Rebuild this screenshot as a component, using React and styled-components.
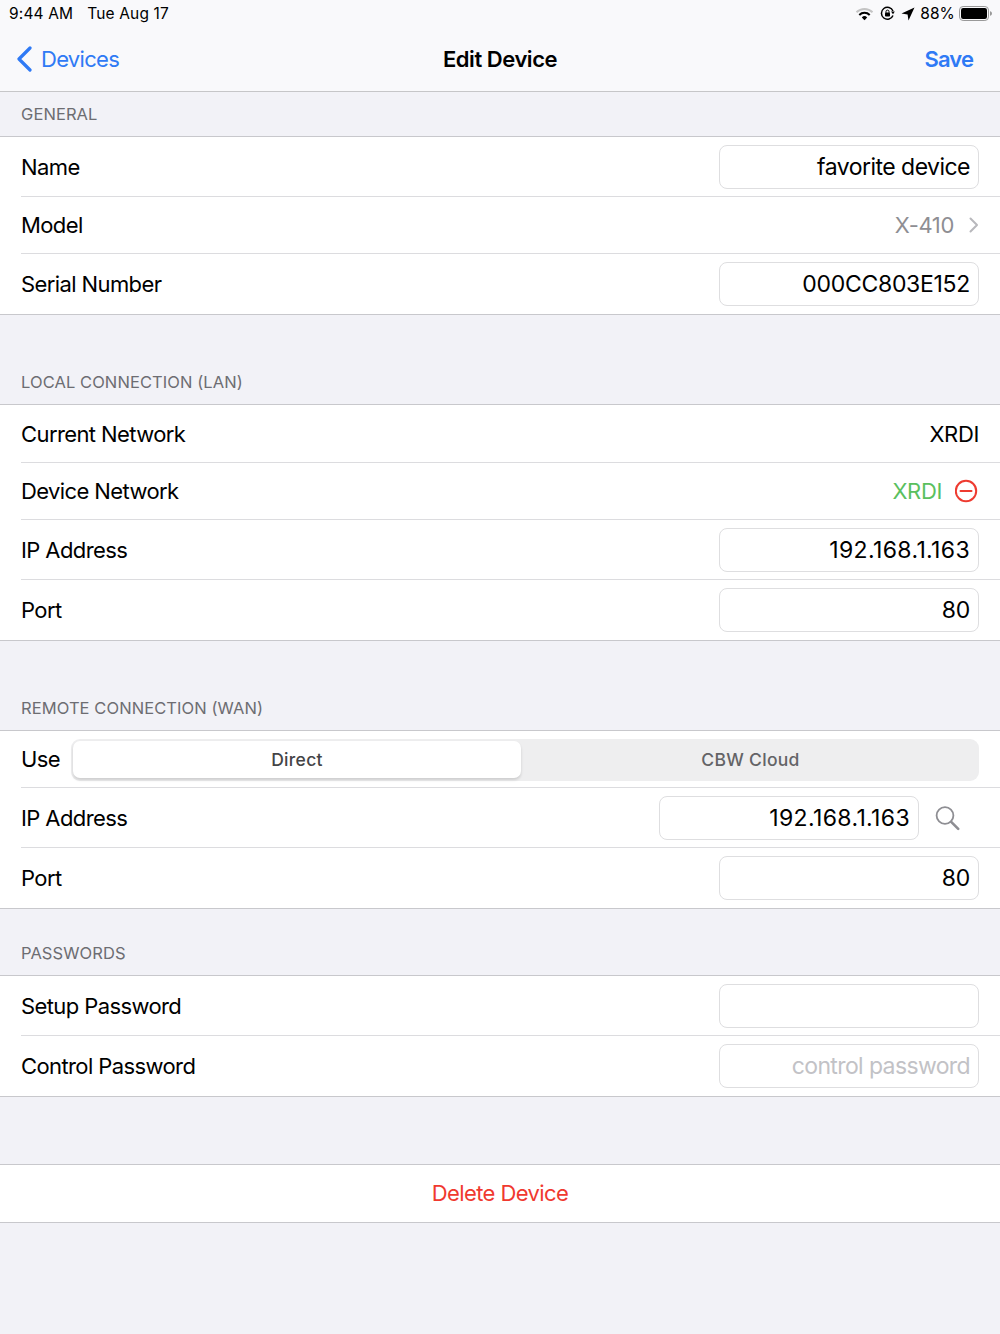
import React from "react";
import styled, { createGlobalStyle } from "styled-components";

const GlobalStyle = createGlobalStyle`
    html, body {
        margin: 0;
        padding: 0;
        background: #f2f2f7;
        font-family: Inter, "Liberation Sans", sans-serif;
    }
    * {
        box-sizing: border-box;
    }
`;

const Page = styled.div`
    width: 1000px;
    height: 1334px;
    overflow: hidden;
    background: #f2f2f7;
`;

const Header = styled.header`
    height: 92px;
    background: #f9f9fb;
    border-bottom: 1px solid #c6c6c8;
`;

const StatusBar = styled.div`
    height: 27px;
    padding: 0 7px 0 9px;
    display: flex;
    align-items: center;
    justify-content: space-between;
    font-size: 15.5px;
    letter-spacing: 0.15px;
    color: #000;
`;

const StatusGroup = styled.div`
    display: flex;
    align-items: center;
    gap: ${(props) => props.$gap || 14}px;
`;

const BatteryLevel = styled.span`
    margin: 0 -2px 0 -1px;
`;

const NavBar = styled.div`
    height: 64px;
    padding: 0 27px;
    display: grid;
    grid-template-columns: 1fr auto 1fr;
    align-items: center;
`;

const BackLink = styled.div`
    margin-left: -11px;
    display: flex;
    align-items: center;
    gap: 8px;
    font-size: 22px;
    letter-spacing: -0.7px;
    color: #2f7af5;
`;

const NavTitle = styled.div`
    font-size: 22px;
    font-weight: 600;
    letter-spacing: -0.45px;
    color: #000;
`;

const SaveLink = styled.div`
    justify-self: end;
    font-size: 22px;
    font-weight: 600;
    letter-spacing: -0.9px;
    color: #2f7af5;
`;

const SectionLabel = styled.div`
    height: ${(props) => props.$height}px;
    padding: 0 21px 12px;
    display: flex;
    align-items: flex-end;
    font-size: 16.5px;
    letter-spacing: 0.08px;
    color: #6d6d72;
`;

const Group = styled.section`
    background: #fff;
    border-top: 1px solid #c8c8cc;
    border-bottom: 1px solid #c8c8cc;
`;

const Row = styled.div`
    height: ${(props) => props.$height || 59}px;
    margin-left: 21px;
    padding-right: 21px;
    display: flex;
    align-items: center;
    justify-content: space-between;
    border-bottom: ${(props) => (props.$last ? "none" : "1px solid #dcdcdf")};
`;

const RowLabel = styled.div`
    font-size: 22px;
    letter-spacing: -0.6px;
    color: #000;
`;

const RowValue = styled.div`
    display: flex;
    align-items: center;
    gap: ${(props) => props.$gap || 13}px;
    font-size: 22px;
    letter-spacing: -0.35px;
    color: ${(props) => props.$color || "#000"};
`;

const Field = styled.div`
    width: 260px;
    height: 44px;
    padding: 0 8px;
    display: flex;
    align-items: center;
    justify-content: flex-end;
    border: 1px solid #dedee0;
    border-radius: 8px;
    background: #fff;
    font-size: 23px;
    letter-spacing: ${(props) => props.$tracking ?? -0.3}px;
    color: ${(props) => (props.$placeholder ? "#c2c2c6" : "#000")};
`;

const SearchField = styled.div`
    display: flex;
    align-items: center;
    gap: 16px;
    padding-right: 19px;
`;

const Segmented = styled.div`
    width: 908px;
    height: 42px;
    margin-top: 1px;
    padding: 2px;
    display: grid;
    grid-template-columns: 448px 1fr;
    align-items: center;
    background: #eeeeef;
    border-radius: 9px;
`;

const Segment = styled.div`
    height: ${(props) => (props.$active ? 37 : 38)}px;
    padding-left: ${(props) => (props.$active ? 0 : 3)}px;
    display: flex;
    align-items: center;
    justify-content: center;
    font-size: 17.5px;
    font-weight: 500;
    letter-spacing: 0.3px;
    color: ${(props) => (props.$active ? "#444446" : "#636366")};
    background: ${(props) => (props.$active ? "#fff" : "transparent")};
    border-radius: 7px;
    box-shadow: ${(props) =>
        props.$active ? "0 2px 3px rgba(0, 0, 0, 0.14)" : "none"};
`;

const DeleteButton = styled.div`
    height: 59px;
    margin-top: 67px;
    padding-bottom: 2px;
    display: flex;
    align-items: center;
    justify-content: center;
    background: #fff;
    border-top: 1px solid #c8c8cc;
    border-bottom: 1px solid #c8c8cc;
    font-size: 22px;
    letter-spacing: -0.6px;
    color: #f0392f;
`;

const WifiIcon = () => (
    <svg width="19" height="14" viewBox="0 0 19 14">
        <path d="M1.5 5.2a11.4 11.4 0 0 1 16 0" fill="none" stroke="#c4c4c4" strokeWidth="2" />
        <path d="M4.3 8a7.4 7.4 0 0 1 10.4 0" fill="none" stroke="#000" strokeWidth="2" />
        <path d="M9.5 13.2 6.8 10.4a3.9 3.9 0 0 1 5.4 0z" fill="#000" />
    </svg>
);

const RotationIcon = () => (
    <svg width="15" height="15" viewBox="0 0 15 15">
        <path d="M13 9.5A6 6 0 1 1 13 5" fill="none" stroke="#000" strokeWidth="1.5" />
        <path d="M11 5.5h3.8L13 8.2z" fill="#000" />
        <rect x="5" y="6.6" width="5" height="4" rx="0.8" fill="#000" />
        <path d="M6 6.8V5.6a1.5 1.5 0 0 1 3 0v1.2" fill="none" stroke="#000" strokeWidth="1" />
    </svg>
);

const LocationIcon = () => (
    <svg width="14" height="14" viewBox="0 0 14 14">
        <path d="M13.5 0.5 0.5 6.6l6.1 0.8 0.9 6.1z" fill="#000" />
    </svg>
);

const BatteryIcon = () => (
    <svg width="34" height="15" viewBox="0 0 34 15">
        <rect x="0.5" y="0.5" width="29" height="14" rx="3.6" fill="none" stroke="#999" />
        <rect x="2" y="2" width="26" height="11" rx="2.2" fill="#000" />
        <path d="M31 5.2c1.2 0.3 2 1.2 2 2.3s-0.8 2-2 2.3z" fill="#999" />
    </svg>
);

const BackChevron = () => (
    <svg width="17" height="26" viewBox="0 0 17 26">
        <path d="M14 2 3 13l11 11" fill="none" stroke="#2f7af5" strokeWidth="3.2" strokeLinecap="round" strokeLinejoin="round" />
    </svg>
);

const RowChevron = () => (
    <svg width="10" height="16" viewBox="0 0 10 16">
        <path d="M1.5 1.5 8 8l-6.5 6.5" fill="none" stroke="#b8b8bc" strokeWidth="2" strokeLinecap="round" strokeLinejoin="round" />
    </svg>
);

const RemoveIcon = () => (
    <svg width="24" height="24" viewBox="0 0 24 24">
        <circle cx="11" cy="12" r="10.2" fill="none" stroke="#ee3b30" strokeWidth="2" />
        <path d="M5.5 12h11" stroke="#ee3b30" strokeWidth="2" strokeLinecap="round" />
    </svg>
);

const SearchIcon = () => (
    <svg width="25" height="26" viewBox="0 0 25 26">
        <circle cx="10" cy="10.5" r="8.4" fill="none" stroke="#8e8e93" strokeWidth="1.8" />
        <path d="m16.2 16.8 7 7" stroke="#8e8e93" strokeWidth="2.6" strokeLinecap="round" />
    </svg>
);

export default function App() {
    return (
        <Page>
            <GlobalStyle />
            <Header>
                <StatusBar>
                    <StatusGroup>
                        <span>9:44 AM</span>
                        <span>Tue Aug 17</span>
                    </StatusGroup>
                    <StatusGroup $gap={6}>
                        <WifiIcon />
                        <RotationIcon />
                        <LocationIcon />
                        <BatteryLevel>88%</BatteryLevel>
                        <BatteryIcon />
                    </StatusGroup>
                </StatusBar>
                <NavBar>
                    <BackLink>
                        <BackChevron />
                        Devices
                    </BackLink>
                    <NavTitle>Edit Device</NavTitle>
                    <SaveLink>Save</SaveLink>
                </NavBar>
            </Header>

            <SectionLabel $height={44}>GENERAL</SectionLabel>
            <Group>
                <Row $height={60}>
                    <RowLabel>Name</RowLabel>
                    <Field $tracking={-0.53}>favorite device</Field>
                </Row>
                <Row $height={57}>
                    <RowLabel>Model</RowLabel>
                    <RowValue $color="#8e8e93" $gap={15}>
                        X-410
                        <RowChevron />
                    </RowValue>
                </Row>
                <Row $height={60} $last>
                    <RowLabel>Serial Number</RowLabel>
                    <Field>000CC803E152</Field>
                </Row>
            </Group>

            <SectionLabel $height={89}>LOCAL CONNECTION (LAN)</SectionLabel>
            <Group>
                <Row $height={58}>
                    <RowLabel>Current Network</RowLabel>
                    <RowValue>XRDI</RowValue>
                </Row>
                <Row $height={57}>
                    <RowLabel>Device Network</RowLabel>
                    <RowValue $color="#5ac05e">
                        XRDI
                        <RemoveIcon />
                    </RowValue>
                </Row>
                <Row $height={60}>
                    <RowLabel>IP Address</RowLabel>
                    <Field $tracking={0.36}>192.168.1.163</Field>
                </Row>
                <Row $height={60} $last>
                    <RowLabel>Port</RowLabel>
                    <Field>80</Field>
                </Row>
            </Group>

            <SectionLabel $height={89}>REMOTE CONNECTION (WAN)</SectionLabel>
            <Group>
                <Row $height={57}>
                    <RowLabel>Use</RowLabel>
                    <Segmented>
                        <Segment $active>Direct</Segment>
                        <Segment>CBW Cloud</Segment>
                    </Segmented>
                </Row>
                <Row $height={60}>
                    <RowLabel>IP Address</RowLabel>
                    <SearchField>
                        <Field $tracking={0.36}>192.168.1.163</Field>
                        <SearchIcon />
                    </SearchField>
                </Row>
                <Row $height={60} $last>
                    <RowLabel>Port</RowLabel>
                    <Field>80</Field>
                </Row>
            </Group>

            <SectionLabel $height={66}>PASSWORDS</SectionLabel>
            <Group>
                <Row $height={60}>
                    <RowLabel>Setup Password</RowLabel>
                    <Field />
                </Row>
                <Row $height={60} $last>
                    <RowLabel>Control Password</RowLabel>
                    <Field $placeholder $tracking={-0.62}>control password</Field>
                </Row>
            </Group>

            <DeleteButton>Delete Device</DeleteButton>
        </Page>
    );
}
